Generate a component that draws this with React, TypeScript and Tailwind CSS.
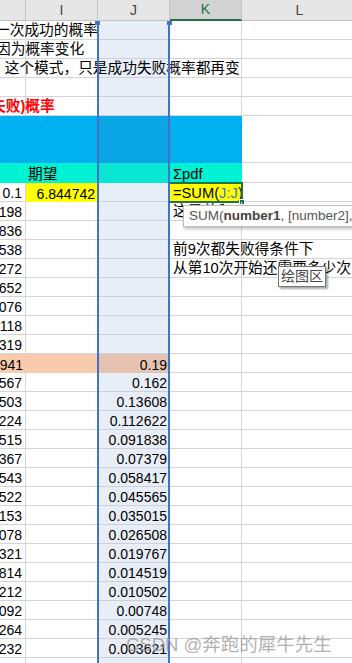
import React from 'react';

// Excel 表格截图：J 列被公式 =SUM(J:J) 引用（蓝框高亮）
const hVals = ['0.1', '198', '836', '538', '272', '652', '076', '118', '319', '941', '567', '503', '224', '515', '367', '543', '522', '153', '078', '321', '814', '212', '092', '264', '232', ''];
const jVals = ['', '', '', '', '', '', '', '', '', '0.19', '0.162', '0.13608', '0.112622', '0.091838', '0.07379', '0.058417', '0.045565', '0.035015', '0.026508', '0.019767', '0.014519', '0.010502', '0.00748', '0.005245', '0.003621', ''];
const kTexts: Record<number, string> = {
  1: '这是总和',
  3: '前9次都失败得条件下',
  4: '从第10次开始还需要多少次',
};

const grid = 'border-[#d4d4d4]';

const App: React.FC = () => {
  return (
    <div className="relative w-[352px] h-[663px] overflow-hidden bg-white font-['Liberation_Sans','Noto_Sans_CJK_SC',sans-serif] text-black">
      {/* column headers */}
      <div className="flex h-[21px] text-[14px] text-[#444]">
        <div className="w-[26px] shrink-0 bg-[#e6e6e6] border-r border-b border-[#c4c4c4]" />
        <div className="w-[71px] shrink-0 bg-[#e6e6e6] border-b border-[#c4c4c4] flex items-center justify-center">I</div>
        <div className="w-[73px] shrink-0 bg-[#e6e6e6] border-x border-b border-[#c4c4c4] flex items-center justify-center">J</div>
        <div className="w-[72px] shrink-0 bg-[#d2d2d2] border-r border-[#c4c4c4] border-b-2 border-b-[#217346] flex items-center justify-center text-[#217346]">K</div>
        <div className="w-[115px] shrink-0 bg-[#e6e6e6] border-b border-[#c4c4c4] flex items-center justify-center">L</div>
      </div>

      {/* rows 1-5: notes that spill across cells */}
      {[
        { text: '一次成功的概率', ml: 'ml-[-5px]', cls: '' },
        { text: '因为概率变化', ml: 'ml-[-4px]', cls: '' },
        { text: '，这个模式，只是成功失败概率都再变', ml: 'ml-[-10px]', cls: '' },
        { text: '', ml: '', cls: '' },
        { text: '失败)概率', ml: 'ml-[-9px]', cls: 'text-[#ff0000] font-bold' },
      ].map((r, i) => (
        <div key={i} className="flex h-[19px] text-[14.7px]">
          <div className={`w-[26px] shrink-0 border-r border-b ${grid} flex items-end`}>
            {r.text && (
              <span className={`relative z-10 whitespace-nowrap leading-[17px] ${r.ml} ${r.cls}`}>{r.text}</span>
            )}
          </div>
          <div className={`w-[71px] shrink-0 border-b ${grid}`} />
          <div className="w-[73px] shrink-0 bg-[#e8eef8] border-b border-[#cbd1db]" />
          <div className={`w-[72px] shrink-0 border-r border-b ${grid}`} />
          <div className={`w-[115px] shrink-0 border-b ${grid}`} />
        </div>
      ))}

      {/* blue band */}
      <div className="flex h-[47px]">
        <div className="w-[26px] shrink-0 bg-[#00b0f0]" />
        <div className="w-[71px] shrink-0 bg-[#00b0f0]" />
        <div className="w-[73px] shrink-0 bg-[#0aa6e6]" />
        <div className="w-[72px] shrink-0 bg-[#00b0f0]" />
        <div className={`w-[115px] shrink-0 border-b ${grid}`} />
      </div>

      {/* cyan header row */}
      <div className="flex h-[20px] text-[14.7px]">
        <div className="w-[26px] shrink-0 bg-[#00f2d2]" />
        <div className="w-[71px] shrink-0 bg-[#00f2d2] flex items-end pl-[2px]">
          <span className="leading-[17px]">期望</span>
        </div>
        <div className="w-[73px] shrink-0 bg-[#0ae6d4]" />
        <div className="w-[72px] shrink-0 bg-[#00f2d2] flex items-end pl-[3px]">
          <span className="leading-[17px]">Σpdf</span>
        </div>
        <div className={`w-[115px] shrink-0 border-b ${grid}`} />
      </div>

      {/* data rows */}
      {hVals.map((hv, i) => {
        const peach = i === 9;
        return (
          <div key={i} className="flex h-[19px] text-[14px]">
            <div className={`w-[26px] shrink-0 flex items-end justify-end pr-[3px] ${peach ? 'bg-[#f8cbad]' : `border-r border-b ${grid}`}`}>
              <span className="whitespace-nowrap leading-[16px]">{hv}</span>
            </div>
            <div className={`w-[71px] shrink-0 flex items-end justify-end pr-[2px] ${peach ? 'bg-[#f8cbad]' : i === 0 ? 'bg-[#ffff00]' : `border-b ${grid}`}`}>
              {i === 0 && <span className="leading-[16px]">6.844742</span>}
            </div>
            <div className={`w-[73px] shrink-0 flex items-end justify-end pr-[3px] ${peach ? 'bg-[#e5c3b0]' : 'bg-[#e8eef8] border-b border-[#cbd1db]'}`}>
              <span className="whitespace-nowrap leading-[16px]">{jVals[i]}</span>
            </div>
            <div className={`relative w-[72px] shrink-0 flex items-end pl-[3px] ${i === 0 ? 'bg-[#ffff00]' : `border-r border-b ${grid}`}`}>
              {i === 0 && (
                <>
                  <span className="text-[14.7px] leading-[17px] whitespace-nowrap">
                    =SUM(<span className="text-[#4472c4]">J:J</span>)
                  </span>
                  {/* active cell frame + fill handle */}
                  <div className="absolute left-[-2px] top-[-1px] right-[-1px] bottom-[-1px] border-2 border-[#217346]" />
                  <div className="absolute right-[-3px] bottom-[-3px] w-[6px] h-[6px] bg-[#217346] border border-white" />
                </>
              )}
              {kTexts[i] && (
                <span className="relative z-10 text-[14.7px] leading-[17px] whitespace-nowrap">{kTexts[i]}</span>
              )}
            </div>
            <div className={`w-[115px] shrink-0 border-b ${grid}`} />
          </div>
        );
      })}

      {/* J:J reference highlight */}
      <div className="pointer-events-none absolute left-[97px] top-[21px] bottom-0 w-[73px] border-x-2 border-[#4472c4] z-20" />
      <div className="absolute left-[95px] top-[21px] w-[5px] h-[4px] bg-[#4472c4] z-20" />
      <div className="absolute left-[167px] top-[21px] w-[5px] h-[4px] bg-[#4472c4] z-20" />

      {/* function argument tip */}
      <div className="absolute left-[183px] top-[205px] w-[190px] h-[22px] bg-white border border-[#bdbdbd] shadow-[1px_2px_3px_rgba(0,0,0,0.25)] z-30 flex items-center pl-[5px] text-[13.5px] text-[#555] whitespace-nowrap">
        SUM(<span className="font-bold text-[#444]">number1</span>, [number2], ...)
      </div>

      {/* chart area tooltip */}
      <div className="absolute left-[278px] top-[266px] w-[48px] h-[21px] bg-white border border-[#767676] shadow-[2px_2px_2px_rgba(0,0,0,0.35)] z-30 flex items-center justify-center text-[14px] text-[#444]">
        绘图区
      </div>

      {/* watermark */}
      <div className="absolute left-[126px] top-[631px] z-30 text-[18.5px] text-[#9c9c9c]/80 whitespace-nowrap">
        CSDN @奔跑的犀牛先生
      </div>
    </div>
  );
};

export default App;
